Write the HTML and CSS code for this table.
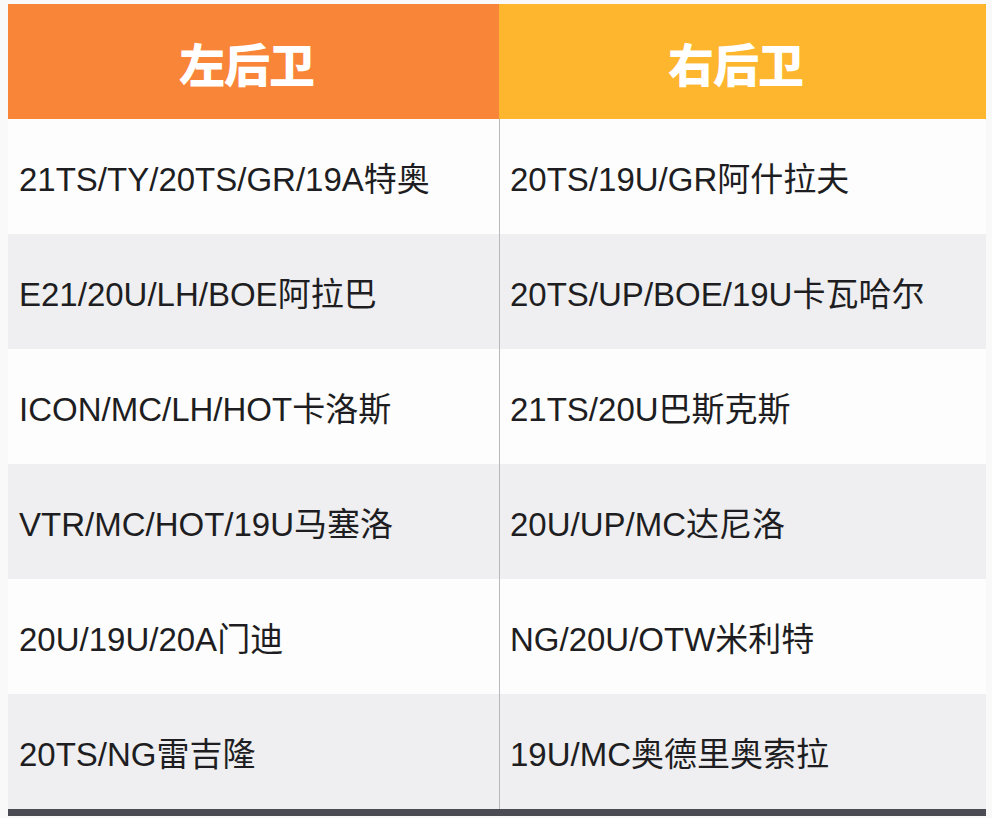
FILE: index.html
```html
<!DOCTYPE html>
<html lang="zh">
<head>
<meta charset="utf-8">
<title>左后卫 / 右后卫</title>
<link rel="stylesheet" href="styles.css">
</head>
<body>
<div class="page">
  <div class="table">
    <div class="row head">
      <div class="cell left">左后卫</div>
      <div class="cell right">右后卫</div>
    </div>
    <div class="row light">
      <div class="cell">21TS/TY/20TS/GR/19A特奥</div>
      <div class="cell div">20TS/19U/GR阿什拉夫</div>
    </div>
    <div class="row gray">
      <div class="cell">E21/20U/LH/BOE阿拉巴</div>
      <div class="cell div">20TS/UP/BOE/19U卡瓦哈尔</div>
    </div>
    <div class="row light">
      <div class="cell">ICON/MC/LH/HOT卡洛斯</div>
      <div class="cell div">21TS/20U巴斯克斯</div>
    </div>
    <div class="row gray">
      <div class="cell">VTR/MC/HOT/19U马塞洛</div>
      <div class="cell div">20U/UP/MC达尼洛</div>
    </div>
    <div class="row light">
      <div class="cell">20U/19U/20A门迪</div>
      <div class="cell div">NG/20U/OTW米利特</div>
    </div>
    <div class="row gray">
      <div class="cell">20TS/NG雷吉隆</div>
      <div class="cell div">19U/MC奥德里奥索拉</div>
    </div>
    <div class="foot"></div>
  </div>
</div>
</body>
</html>
```
FILE: styles.css
```css
html, body {
  margin: 0;
  padding: 0;
  background: #f9f9fa;
}
.page {
  padding: 4px 6px 0 8px;
  height: 818px;
  box-sizing: border-box;
  overflow: hidden;
}
.table {
  width: 978px;
  display: flex;
  flex-direction: column;
  font-family: "Liberation Sans", "Noto Sans CJK SC", sans-serif;
}
.row {
  display: grid;
  grid-template-columns: 491px 487px;
  height: 115px;
}
.cell {
  display: flex;
  align-items: center;
  padding-left: 11px;
  font-size: 33px;
  color: #1e1e22;
  letter-spacing: 0;
  white-space: nowrap;
}
.cell.div {
  border-left: 1px solid #b9b9bc;
  padding-left: 10px;
}
.light { background: #fdfdfd; }
.gray { background: #efeff1; }
.head .cell {
  justify-content: center;
  padding: 0 14px 0 0;
  color: #ffffff;
  font-family: "Noto Sans CJK SC", sans-serif;
  font-weight: 900;
  font-size: 46px;
  letter-spacing: -1px;
}
.head .left { background: #f98538; }
.head .right { background: #fdb62d; }
.foot {
  height: 7px;
  background: #4b4b53;
}
```
